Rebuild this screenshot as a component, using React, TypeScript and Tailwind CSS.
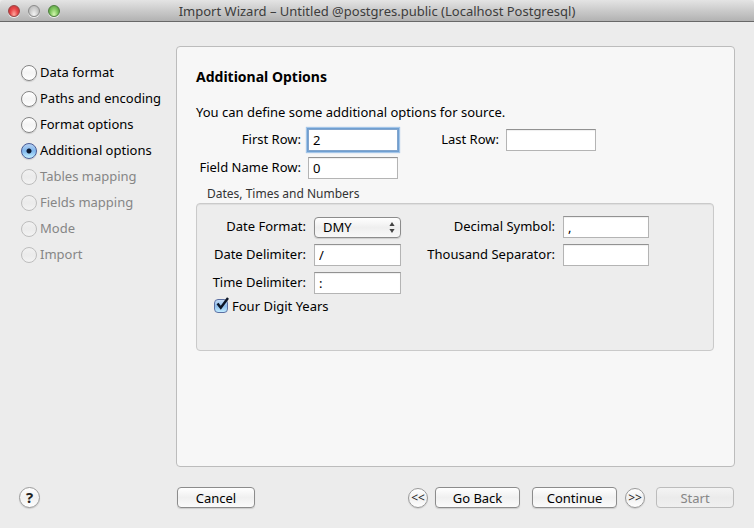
import React, { useState } from "react";

const steps = [
  { name: "Data format", enabled: true },
  { name: "Paths and encoding", enabled: true },
  { name: "Format options", enabled: true },
  { name: "Additional options", enabled: true },
  { name: "Tables mapping", enabled: false },
  { name: "Fields mapping", enabled: false },
  { name: "Mode", enabled: false },
  { name: "Import", enabled: false },
];

function TitleBar() {
  return (
    <header className="grid h-[22px] shrink-0 grid-cols-[52px_1fr_52px] items-center rounded-t border-b border-[#686868] bg-linear-to-b from-[#e4e4e4] to-[#b2b2b2] px-2">
      <div className="flex gap-2">
        <button aria-label="Close" className="size-3 rounded-full border border-[#9b4343] bg-radial-[at_50%_85%] from-[#ffaaa0] via-[#e9484a] to-[#b52c30] shadow-[0_1px_0_#eee]" />
        <button aria-label="Minimize" className="size-3 rounded-full border border-[#8b8b8b] bg-radial-[at_50%_85%] from-[#f4f4f4] via-[#cfcfcf] to-[#a9a9a9] shadow-[0_1px_0_#eee]" />
        <button aria-label="Zoom" className="size-3 rounded-full border border-[#4d7f3d] bg-radial-[at_50%_85%] from-[#d5f7b0] via-[#83c962] to-[#4b8b38] shadow-[0_1px_0_#eee]" />
      </div>
      <h1 className="text-center leading-5 whitespace-nowrap text-[#3c3c3c]">
        Import Wizard – Untitled @postgres.public (Localhost Postgresql)
      </h1>
    </header>
  );
}

function StepList() {
  const [current, setCurrent] = useState(3);
  return (
    <nav className="w-[155px] shrink-0 pt-[14px]">
      {steps.map((step, i) => (
        <label
          key={step.name}
          className={`flex h-[26px] items-center gap-[3px] whitespace-nowrap ${step.enabled ? "text-black" : "text-[#868686]"}`}
        >
          <input
            type="radio"
            name="step"
            disabled={!step.enabled}
            checked={current === i}
            onChange={() => setCurrent(i)}
            className="size-4 shrink-0 appearance-none rounded-full border border-[#858585] bg-linear-to-b from-white via-[#f4f4f4] to-white shadow-[0_1px_1px_#0002] checked:border-[#4a5c96] checked:bg-[radial-gradient(circle_at_center,#0b1830_0_2px,transparent_3px),linear-gradient(#b4d0f2,#7fb6ec_50%,#c4f0ff)] disabled:border-[#bdbdbd] disabled:from-[#f1f1f1] disabled:via-[#ebebeb] disabled:to-[#f3f3f3] disabled:shadow-none"
          />
          {step.name}
        </label>
      ))}
    </nav>
  );
}

function TextField({ id, label, value = "", focused = false }: { id: string; label: string; value?: string; focused?: boolean }) {
  return (
    <>
      <label htmlFor={id} className="text-right whitespace-nowrap">{label}</label>
      <input
        id={id}
        type="text"
        defaultValue={value}
        className={`h-[22px] w-full min-w-0 border bg-white px-1 outline-none ${
          focused
            ? "border-[#82a5cd] shadow-[0_0_0_1px_#6f9fd1,0_0_1px_2px_#a3c5e8]"
            : "border-[#b4b4b4] border-t-[#929292] shadow-[inset_0_1px_1px_#0001]"
        }`}
      />
    </>
  );
}

function PushButton({ children, disabled = false, className }: { children: React.ReactNode; disabled?: boolean; className: string }) {
  return (
    <button
      disabled={disabled}
      className={`h-[21px] rounded border border-[#8c8c8c] bg-linear-to-b from-white via-[#f0f0f0] to-[#fbfbfb] leading-[18px] text-black shadow-[0_1px_1px_#0002] disabled:border-[#bcbcbc] disabled:from-[#f4f4f4] disabled:via-[#ebebeb] disabled:to-[#f0f0f0] disabled:text-[#868686] disabled:shadow-none ${className}`}
    >
      {children}
    </button>
  );
}

function RoundButton({ label, children, className }: { label: string; children: React.ReactNode; className: string }) {
  return (
    <button
      aria-label={label}
      className={`flex shrink-0 items-center justify-center rounded-full border border-[#9a9a9a] bg-linear-to-b from-white via-[#f0f0f0] to-white text-[#222] shadow-[0_1px_1px_#0002] ${className}`}
    >
      {children}
    </button>
  );
}

function DatesGroup() {
  return (
    <fieldset className="mt-[6px]">
      <legend className="ml-[11px] text-xs leading-[18px] text-[#333]">Dates, Times and Numbers</legend>
      <div className="min-h-[148px] rounded border border-[#cacaca] bg-[#ededed] pt-3 pl-[15px] shadow-[inset_0_1px_1px_#0001]">
        <div className="flex gap-6">
          <div className="grid auto-rows-[22px] grid-cols-[94px_87px] items-center gap-x-2 gap-y-[6px]">
            <label htmlFor="date-format" className="text-right whitespace-nowrap">Date Format:</label>
            <div className="relative">
              <select
                id="date-format"
                defaultValue="DMY"
                className="block h-[21px] w-full appearance-none rounded border border-[#8c8c8c] bg-linear-to-b from-white via-[#efefef] to-[#f8f8f8] pl-2 leading-[18px] shadow-[0_1px_1px_#0002] outline-none"
              >
                <option>DMY</option>
                <option>MDY</option>
                <option>YMD</option>
              </select>
              <svg viewBox="0 0 6 11" className="pointer-events-none absolute top-[5px] right-[6px] h-[11px] w-[6px]" fill="#444">
                <path d="M3 0 5.6 4H.4zM3 11 .4 7h5.2z" />
              </svg>
            </div>
            <TextField id="date-delimiter" label="Date Delimiter:" value="/" />
            <TextField id="time-delimiter" label="Time Delimiter:" value=":" />
          </div>
          <div className="grid auto-rows-[22px] grid-cols-[130px_86px] content-start items-center gap-x-2 gap-y-[6px]">
            <TextField id="decimal-symbol" label="Decimal Symbol:" value="," />
            <TextField id="thousand-separator" label="Thousand Separator:" />
          </div>
        </div>
        <label className="mt-[3px] flex w-fit items-center gap-1 pl-[2px] leading-[18px]">
          <span className="relative flex">
            <input
              type="checkbox"
              defaultChecked
              className="peer size-[14px] appearance-none rounded-sm border border-[#8c8c8c] bg-white checked:border-[#5c70a3] checked:bg-linear-to-b checked:from-[#c5dcf5] checked:via-[#8dbdec] checked:to-[#c0ecff]"
            />
            <svg viewBox="0 0 16 16" className="pointer-events-none absolute -top-[2px] left-0 hidden size-4 peer-checked:block" fill="none" stroke="#0b1526" strokeWidth="2.4">
              <path d="M3.5 6.5 6.8 10.8 14 1" />
            </svg>
          </span>
          Four Digit Years
        </label>
      </div>
    </fieldset>
  );
}

export default function App() {
  return (
    <div className="flex min-h-screen flex-col bg-[#ececec] font-['Noto_Sans',sans-serif] text-[13px] text-black">
      <TitleBar />
      <main className="flex flex-1 pt-6 pr-[19px] pl-[21px]">
        <StepList />
        <section className="min-w-0 flex-1 rounded border border-[#bcbcbc] bg-[#f7f7f7] pt-5 pr-5 pl-[19px]">
          <h2 className="text-sm leading-5 font-bold">Additional Options</h2>
          <p className="mt-[15px] leading-5">You can define some additional options for source.</p>
          <div className="mt-[7px] flex gap-[38px]">
            <div className="grid auto-rows-[22px] grid-cols-[105px_90px] items-center gap-x-[7px] gap-y-[6px]">
              <TextField id="first-row" label="First Row:" value="2" focused />
              <TextField id="field-name-row" label="Field Name Row:" value="0" />
            </div>
            <div className="grid auto-rows-[22px] grid-cols-[63px_90px] content-start items-center gap-x-[7px]">
              <TextField id="last-row" label="Last Row:" />
            </div>
          </div>
          <DatesGroup />
        </section>
      </main>
      <footer className="flex h-[61px] shrink-0 items-center pr-5 pl-[19px]">
        <div className="w-[158px]">
          <RoundButton label="Help" className="size-[21px] text-[15px] font-bold">?</RoundButton>
        </div>
        <PushButton className="w-[78px]">Cancel</PushButton>
        <div className="ml-auto flex items-center">
          <RoundButton label="First step" className="size-5 text-xs">&lt;&lt;</RoundButton>
          <PushButton className="ml-[7px] w-[85px]">Go Back</PushButton>
          <PushButton className="ml-3 w-[85px]">Continue</PushButton>
          <RoundButton label="Last step" className="ml-2 size-5 text-xs">&gt;&gt;</RoundButton>
          <PushButton disabled className="ml-[11px] w-[78px]">Start</PushButton>
        </div>
      </footer>
    </div>
  );
}
